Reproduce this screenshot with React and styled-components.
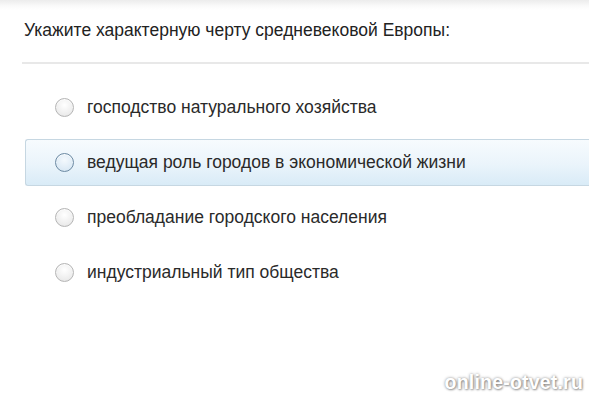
import React, { useState } from "react";
import styled, { createGlobalStyle } from "styled-components";

const GlobalStyle = createGlobalStyle`
  html, body {
    margin: 0;
    padding: 0;
    background: #fff;
  }
  body {
    width: 589px;
    height: 400px;
    overflow: hidden;
    font-family: "Liberation Sans", Arial, sans-serif;
  }
`;

const Page = styled.div`
  position: relative;
  width: 589px;
  height: 400px;
  background: linear-gradient(to bottom, #ececec 0px, #fafafa 6px, #fff 10px);
`;

const Question = styled.div`
  padding: 20px 0 0 24px;
  height: 42px;
  font-size: 17.5px;
  line-height: 20px;
  color: #222;
`;

const Divider = styled.div`
  margin-left: 22px;
  height: 2px;
  background: #e8e8e8;
`;

const Options = styled.div`
  display: flex;
  flex-direction: column;
  padding-top: 20px;
  padding-left: 25px;
`;

const Option = styled.label`
  display: flex;
  align-items: center;
  gap: 13px;
  height: 47px;
  margin-bottom: 8px;
  padding-left: 29px;
  box-sizing: border-box;
  font-size: 17.5px;
  color: #2a2a2a;
  cursor: pointer;
  border: 1px solid ${(p) => (p.$active ? "#c6d7e2" : "transparent")};
  border-right: none;
  border-radius: 3px 0 0 3px;
  background: ${(p) =>
    p.$active
      ? "linear-gradient(to bottom, #f7fbfe 0%, #eaf4fb 55%, #d9ebf7 100%)"
      : "transparent"};
`;

const Radio = styled.span`
  width: 19px;
  height: 19px;
  flex: none;
  border-radius: 50%;
  box-sizing: border-box;
  border: 1.5px solid ${(p) => (p.$active ? "#6c8aa3" : "#b5b5b5")};
  background: ${(p) =>
    p.$active
      ? "radial-gradient(circle at 50% 35%, #f4f9fd 0%, #dceaf5 70%, #c8dbea 100%)"
      : "radial-gradient(circle at 50% 35%, #ffffff 0%, #ececec 70%, #d8d8d8 100%)"};
  box-shadow: inset 0 1px 1px rgba(255, 255, 255, 0.8);
`;

const Watermark = styled.div`
  position: absolute;
  right: 6px;
  bottom: 6px;
  font-size: 19.5px;
  font-weight: bold;
  color: #fff;
  letter-spacing: 0.2px;
  text-shadow: 0 0 3px rgba(0, 0, 0, 0.45), 1px 1px 2px rgba(0, 0, 0, 0.3);
`;

const answers = [
  "господство натурального хозяйства",
  "ведущая роль городов в экономической жизни",
  "преобладание городского населения",
  "индустриальный тип общества",
];

export default function App() {
  const [hover] = useState(1);
  return (
    <>
      <GlobalStyle />
      <Page>
        <Question>Укажите характерную черту средневековой Европы:</Question>
        <Divider />
        <Options>
          {answers.map((a, i) => (
            <Option key={a} $active={i === hover}>
              <Radio $active={i === hover} />
              {a}
            </Option>
          ))}
        </Options>
        <Watermark>online-otvet.ru</Watermark>
      </Page>
    </>
  );
}
